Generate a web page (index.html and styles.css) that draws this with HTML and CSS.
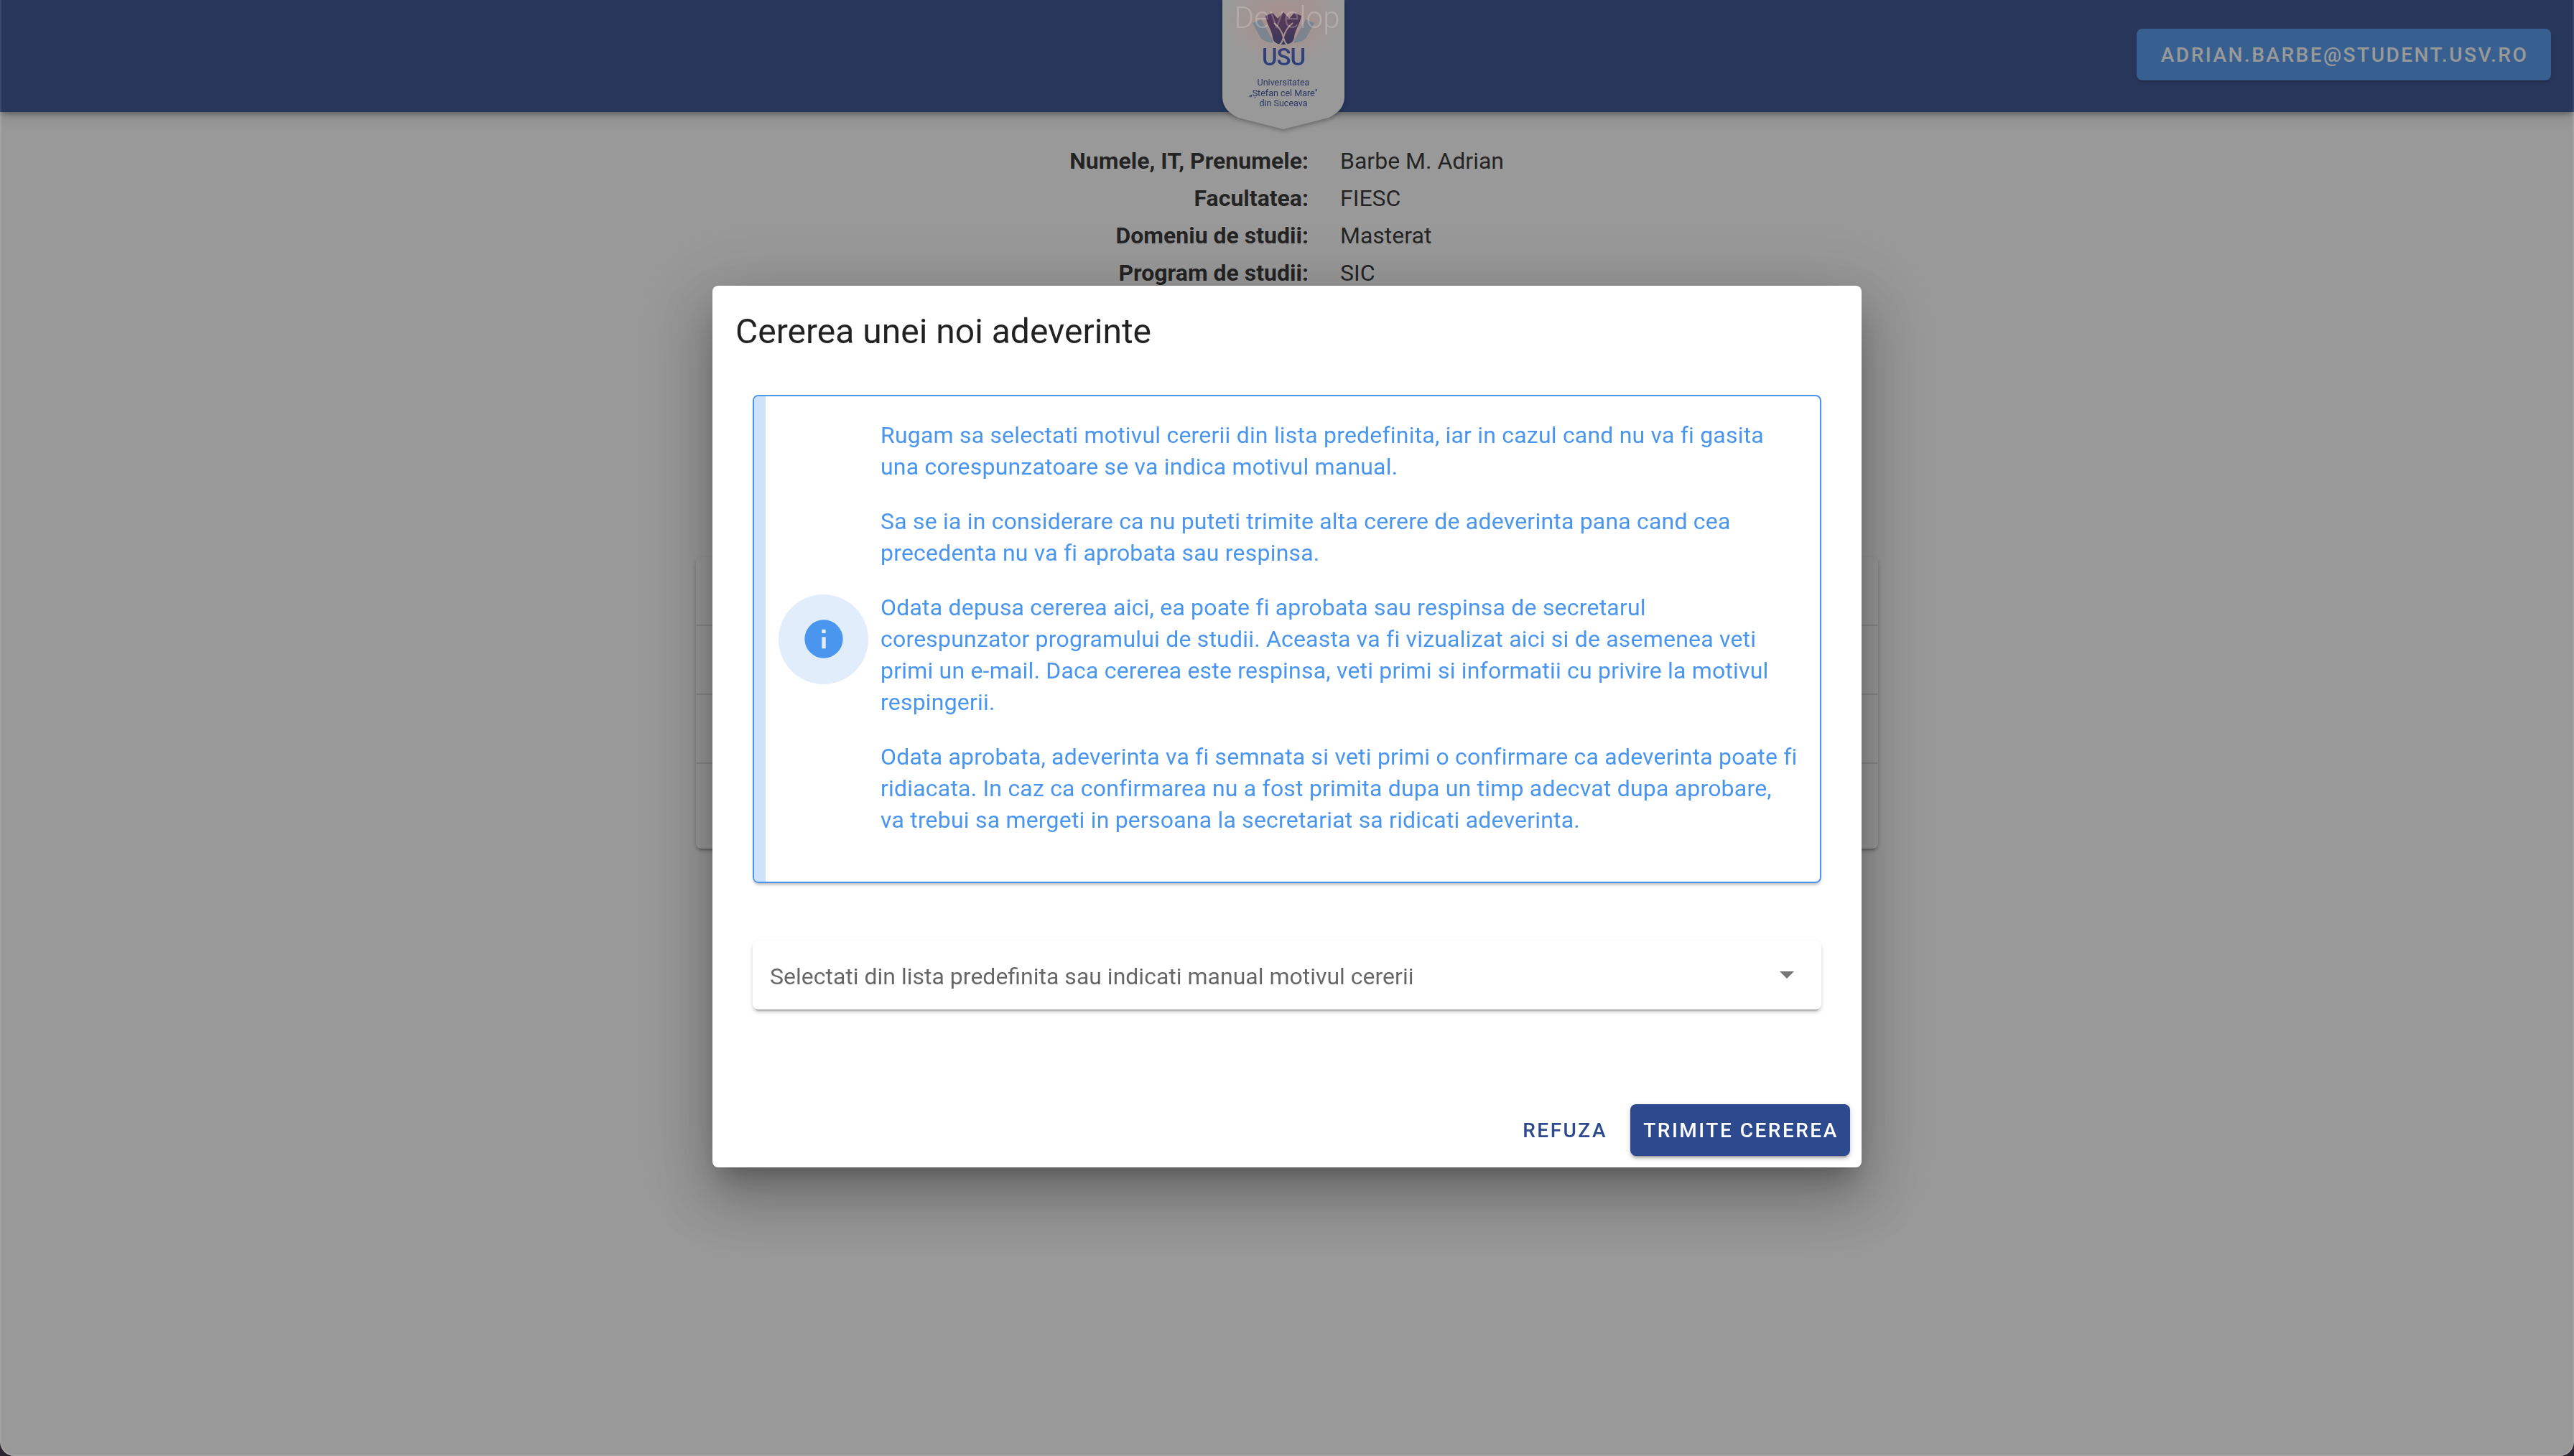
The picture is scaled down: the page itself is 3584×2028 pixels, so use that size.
FILE: index.html
```html
<!DOCTYPE html>
<html lang="ro">
<head>
    <meta charset="UTF-8">
    <title>Adeverinte</title>
    <link rel="stylesheet" href="styles.css">
</head>
<body>
    <header class="toolbar">
        <div class="logo">
            <svg class="logo-shield" width="170" height="182" viewBox="0 0 170 182">
                <defs>
                    <linearGradient id="hands" x1="0" y1="0" x2="0" y2="1">
                        <stop offset="0" stop-color="#4b3f8e"/>
                        <stop offset="1" stop-color="#2e4590"/>
                    </linearGradient>
                </defs>
                <path d="M0 0H170V134C170 150 160 158 148 164L85 180L22 164C10 158 0 150 0 134Z" fill="#fff"/>
                <path d="M42 32L54 27L70 56V60C62 58 56 57 53 52Z" fill="#aee0fa"/>
                <path d="M128 32L116 27L100 56V60C108 58 114 57 117 52Z" fill="#aee0fa"/>
                <path d="M60 22L70 18L77 26L85 17L93 26L100 18L110 22C108 34 101 42 100 52C99 60 92 62 85 62C78 62 71 60 70 52C69 42 62 34 60 22Z" fill="url(#hands)"/>
                <path d="M72 32Q82 40 85 52Q88 40 98 32M85 52Q84 58 80 62M85 52Q86 58 90 62" fill="none" stroke="#fff" stroke-width="2"/>
            </svg>
            <div class="logo-usu">USU</div>
            <div class="logo-name">Universitatea<br>„Ștefan cel Mare"<br>din Suceava</div>
        </div>
        <button class="btn-email">adrian.barbe@student.usv.ro</button>
    </header>

    <main>
        <div class="info">
            <div class="info-label">Numele, IT, Prenumele:</div><div>Barbe M. Adrian</div>
            <div class="info-label">Facultatea:</div><div>FIESC</div>
            <div class="info-label">Domeniu de studii:</div><div>Masterat</div>
            <div class="info-label">Program de studii:</div><div>SIC</div>
        </div>
        <div class="table-card">
            <div class="table-row"></div>
            <div class="table-row"></div>
            <div class="table-row"></div>
            <div class="table-row table-row-last"></div>
        </div>
    </main>

    <div class="overlay"></div>

    <div class="dev-tag">Develop</div>

    <div class="dialog-wrap">
        <div class="dialog">
            <h2 class="dialog-title">Cererea unei noi adeverinte</h2>
            <div class="alert">
                <div class="alert-bar"></div>
                <div class="alert-icon">
                    <svg width="64" height="64" viewBox="0 0 24 24">
                        <path d="M13 9H11V7H13M13 17H11V11H13M12 2A10 10 0 0 0 2 12A10 10 0 0 0 12 22A10 10 0 0 0 22 12A10 10 0 0 0 12 2Z" fill="#4a96ee"/>
                    </svg>
                </div>
                <div class="alert-body">
                    <p>Rugam sa selectati motivul cererii din lista predefinita, iar in cazul cand nu va fi gasita una corespunzatoare se va indica motivul manual.</p>
                    <p>Sa se ia in considerare ca nu puteti trimite alta cerere de adeverinta pana cand cea precedenta nu va fi aprobata sau respinsa.</p>
                    <p>Odata depusa cererea aici, ea poate fi aprobata sau respinsa de secretarul corespunzator programului de studii. Aceasta va fi vizualizat aici si de asemenea veti primi un e-mail. Daca cererea este respinsa, veti primi si informatii cu privire la motivul respingerii.</p>
                    <p>Odata aprobata, adeverinta va fi semnata si veti primi o confirmare ca adeverinta poate fi ridiacata. In caz ca confirmarea nu a fost primita dupa un timp adecvat dupa aprobare, va trebui sa mergeti in persoana la secretariat sa ridicati adeverinta.</p>
                </div>
            </div>
            <div class="select">
                <span>Selectati din lista predefinita sau indicati manual motivul cererii</span>
                <span class="select-arrow"></span>
            </div>
            <div class="actions">
                <button class="btn btn-text">Refuza</button>
                <button class="btn btn-primary">Trimite cererea</button>
            </div>
        </div>
    </div>

    <div class="window-edge"></div>
</body>
</html>
```
FILE: styles.css
```css
* { box-sizing: border-box; }
html, body { height: 100%; }
body { margin: 0; font-family: Roboto, "Liberation Sans", sans-serif; background-color: #fff; color: rgba(0,0,0,.87); overflow: hidden; }

button { font-family: inherit; font-size: 28px; font-weight: 500; letter-spacing: 2.5px; text-indent: 2px; text-transform: uppercase; border: 0; border-radius: 8px; height: 72px; padding: 0 32px; }

.toolbar { position: relative; height: 156px; background-color: #2d4a8f; display: flex; align-items: center; justify-content: flex-end; padding: 0 32px 4px 0; box-shadow: 0 4px 8px -2px rgba(0,0,0,.4), 0 8px 20px rgba(0,0,0,.14); }
.btn-email { width: 577px; padding: 0; background-color: #4a96ee; color: #fff; box-shadow: 0 6px 2px -4px rgba(0,0,0,.2), 0 4px 4px rgba(0,0,0,.14); }

.logo { position: absolute; left: 1702px; top: 0; width: 170px; height: 182px; text-align: center; color: #3459c8; filter: drop-shadow(0 2px 3px rgba(0,0,0,.35)); }
.logo-shield { position: absolute; left: 0; top: 0; }
.logo-usu { position: relative; padding-top: 61px; font-size: 33px; line-height: 38px; font-weight: 500; letter-spacing: -1px; }
.logo-name { position: relative; margin-top: 9px; font-size: 12.5px; line-height: 14.5px; color: #34489c; }

.info { display: grid; grid-template-columns: 1822px 1fr; column-gap: 44px; padding-top: 42px; font-size: 32px; line-height: 52px; }
.info-label { text-align: right; font-weight: 700; }

.table-card { width: 1646px; margin: 370px 0 0 969px; border-radius: 8px; background-color: #fff; box-shadow: 0 6px 2px -4px rgba(0,0,0,.2), 0 4px 4px rgba(0,0,0,.14), 0 2px 10px rgba(0,0,0,.12); }
.table-row { height: 96px; border-bottom: 2px solid rgba(0,0,0,.12); }
.table-row-last { height: 118px; border-bottom: 0; }

.overlay { position: fixed; inset: 0; background-color: #212121; opacity: .46; }

.dev-tag { position: fixed; left: 1702px; top: 0; width: 170px; height: 100px; padding: 2px 0 0 10px; text-align: center; font-size: 42px; line-height: 46px; font-weight: 300; color: rgba(255,255,255,.22); background: radial-gradient(ellipse 85px 60px at 50% 30%, rgba(255,90,70,.18), rgba(255,90,70,0)); }

.dialog-wrap { position: fixed; inset: 0; display: flex; justify-content: center; padding-top: 398px; }
.dialog { width: 1600px; height: 1228px; background-color: #fff; border-radius: 8px; display: flex; flex-direction: column; padding: 0 16px 16px; box-shadow: 0 22px 30px -14px rgba(0,0,0,.24), 0 48px 76px 6px rgba(0,0,0,.17), 0 18px 92px 16px rgba(0,0,0,.15); }
.dialog-title { margin: 0; padding: 32px 16px 0; font-size: 48px; line-height: 64px; font-weight: 400; height: 152px; }

.alert { margin: 0 40px; border: 2px solid #4a96ee; border-radius: 8px; display: flex; align-items: center; color: #4a96ee; overflow: hidden; box-shadow: 0 4px 4px -2px rgba(0,0,0,.3); }
.alert-bar { align-self: stretch; width: 16px; flex: none; background-color: #cfe2fb; }
.alert-icon { flex: none; width: 125px; height: 125px; margin: 0 17px 0 18px; border-radius: 50%; background-color: #e2edfc; display: flex; align-items: center; justify-content: center; }
.alert-icon svg { display: block; }
.alert-body { flex: 1; padding: 32px 30px 32px 0; font-size: 32px; line-height: 44px; letter-spacing: .2px; }
.alert-body p { margin: 0 0 32px; }

.select { margin: 80px 40px 0; height: 96px; padding: 4px 36px 0 24px; border-radius: 8px; display: flex; align-items: center; justify-content: space-between; font-size: 32px; color: rgba(0,0,0,.6); box-shadow: 0 6px 2px -4px rgba(0,0,0,.2), 0 4px 4px rgba(0,0,0,.14), 0 2px 10px rgba(0,0,0,.06); }
.select-arrow { width: 0; height: 0; margin: -4px 2px 0 0; border-left: 10px solid transparent; border-right: 10px solid transparent; border-top: 10px solid #757575; }

.actions { margin-top: auto; display: flex; justify-content: flex-end; gap: 16px; }
.btn-text { background: none; color: #2d4a8f; padding: 0 16px; }
.btn-primary { background-color: #2d4a8f; color: #fff; width: 306px; padding: 0; box-shadow: 0 6px 2px -4px rgba(0,0,0,.2), 0 4px 4px rgba(0,0,0,.14), 0 2px 10px rgba(0,0,0,.12); }

/* rounded bottom corners of the captured window */
.window-edge { position: fixed; left: 0; right: 0; top: -40px; bottom: 0; border-radius: 0 0 20px 20px; box-shadow: 0 0 0 30px #2a2530, inset 0 0 0 2px rgba(255,255,255,.1); pointer-events: none; }
```
